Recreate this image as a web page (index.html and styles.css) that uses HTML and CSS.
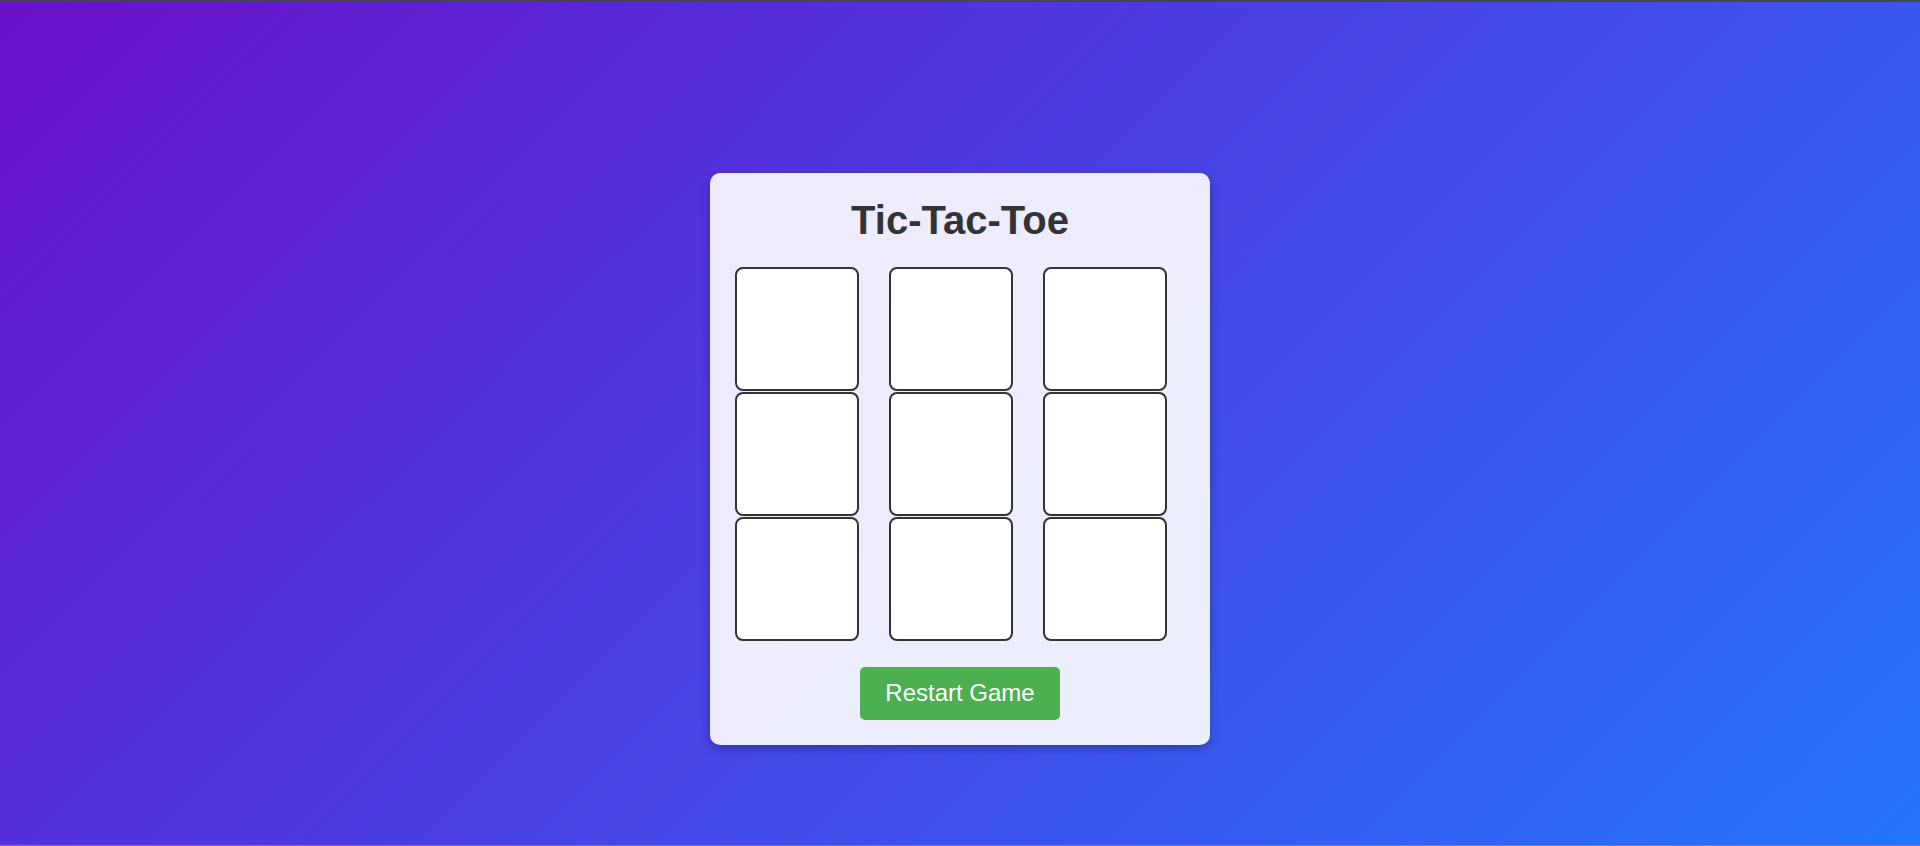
FILE: index.html
```html
<!DOCTYPE html>
<html lang="en">
<head>
<meta charset="UTF-8">
<title>Tic-Tac-Toe</title>
<link rel="stylesheet" href="styles.css">
</head>
<body>
<div class="page">
  <div class="card">
    <h1 class="title">Tic-Tac-Toe</h1>
    <div class="board">
      <div class="cell"></div>
      <div class="cell"></div>
      <div class="cell"></div>
      <div class="cell"></div>
      <div class="cell"></div>
      <div class="cell"></div>
      <div class="cell"></div>
      <div class="cell"></div>
      <div class="cell"></div>
    </div>
    <button class="restart">Restart Game</button>
  </div>
</div>
</body>
</html>
```

FILE: styles.css
```css
html {
  background: #9b5ee4;
}
body {
  margin: 0;
  font-family: "Liberation Sans", Arial, sans-serif;
}
.page {
  box-sizing: border-box;
  height: 845px;
  border-top: 2px solid #43474d;
  background: linear-gradient(135deg, #6a11cb 0%, #2575fc 100%);
  display: flex;
  justify-content: center;
  align-items: center;
  padding-top: 70px;
}
.card {
  box-sizing: border-box;
  width: 500px;
  padding: 25px;
  background: rgba(255, 255, 255, 0.9);
  border-radius: 10px;
  box-shadow: 0 4px 10px rgba(0, 0, 0, 0.25);
  display: flex;
  flex-direction: column;
  align-items: center;
}
.title {
  margin: 0 0 24px;
  font-size: 40px;
  font-weight: bold;
  color: #333;
  text-align: center;
}
.board {
  align-self: flex-start;
  display: grid;
  grid-template-columns: repeat(3, 124px);
  grid-auto-rows: 124px;
  column-gap: 30px;
  row-gap: 1px;
}
.cell {
  box-sizing: border-box;
  background: #fff;
  border: 2px solid #333;
  border-radius: 8px;
}
.restart {
  margin-top: 26px;
  box-sizing: border-box;
  width: 200px;
  height: 53px;
  padding: 0;
  font-family: "Liberation Sans", Arial, sans-serif;
  font-size: 24px;
  color: #fff;
  background: #4caf50;
  border: none;
  border-radius: 5px;
}
```
